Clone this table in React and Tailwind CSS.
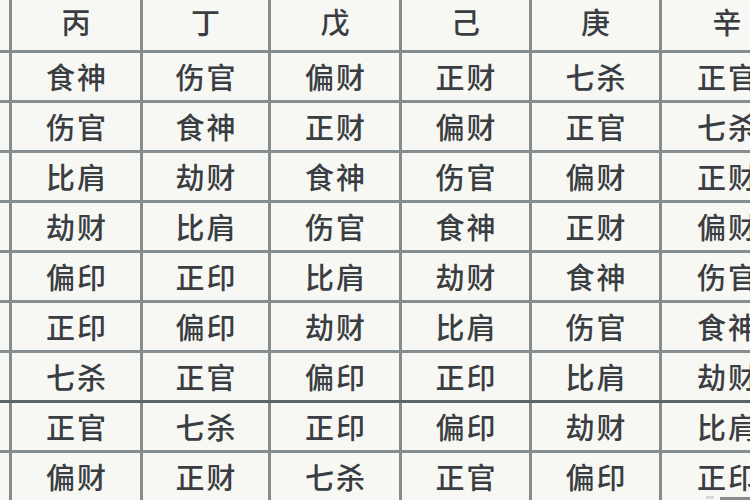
import React from "react";

const header = ["丙", "丁", "戊", "己", "庚", "辛"];
const rows = [
  ["食神", "伤官", "偏财", "正财", "七杀", "正官"],
  ["伤官", "食神", "正财", "偏财", "正官", "七杀"],
  ["比肩", "劫财", "食神", "伤官", "偏财", "正财"],
  ["劫财", "比肩", "伤官", "食神", "正财", "偏财"],
  ["偏印", "正印", "比肩", "劫财", "食神", "伤官"],
  ["正印", "偏印", "劫财", "比肩", "伤官", "食神"],
  ["七杀", "正官", "偏印", "正印", "比肩", "劫财"],
  ["正官", "七杀", "正印", "偏印", "劫财", "比肩"],
  ["偏财", "正财", "七杀", "正官", "偏印", "正印"],
];

const widths = ["w-[131px]", "w-[128px]", "w-[131px]", "w-[130px]", "w-[130px]", "w-[130px]"];

function Row({ cells, h, borderCls, head }) {
  return (
    <div className={`flex shrink-0 ${h} ${borderCls}`}>
      <div className="w-[12px] shrink-0 border-r-[3px] border-[#858c8d]" />
      {cells.map((c, i) => (
        <div
          key={i}
          className={`${widths[i]} shrink-0 flex justify-center ${head ? "items-start pt-[7px]" : "items-center"} ${i < 5 ? "border-r-[3px] border-[#858c8d]" : ""}`}
        >
          <span className="text-[29px] leading-none font-medium text-[#3a3d42] tracking-[2px] pl-[2px]">{c}</span>
        </div>
      ))}
    </div>
  );
}

export default function App() {
  return (
    <div
      className="relative w-[750px] h-[500px] overflow-hidden bg-[#f7f8f3]"
      style={{ fontFamily: '"Noto Sans CJK SC", "Noto Sans", sans-serif' }}
    >
      <div className="flex flex-col w-[900px]">
        <Row cells={header} head h="h-[53px]" borderCls="border-b-[3px] border-[#858c8d]" />
        {rows.map((r, i) => (
          <Row
            key={i}
            cells={r}
            h="h-[50px]"
            borderCls={i === 6 ? "border-b-[3px] border-[#5c6467]" : "border-b-[3px] border-[#878e8f]"}
          />
        ))}
      </div>
      <div className="absolute right-0 bottom-0 w-[30px] h-[3px] bg-[#8a8a8a]" />
      <div className="absolute right-[36px] bottom-[1px] w-[8px] h-[3px] bg-[#d8d8d8]" />
    </div>
  );
}
